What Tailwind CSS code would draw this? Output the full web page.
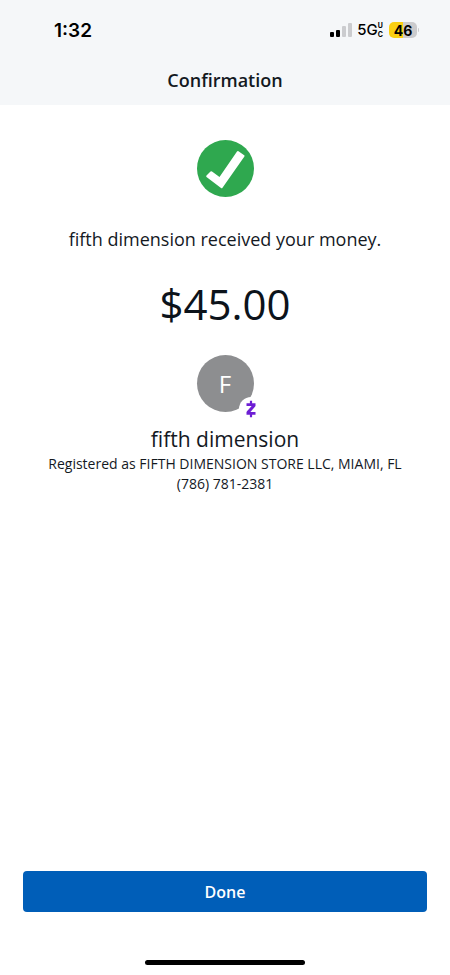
<!DOCTYPE html>
<html lang="en">
<head>
<meta charset="utf-8">
<meta name="viewport" content="width=device-width, initial-scale=1">
<title>Confirmation</title>
<script src="https://cdn.jsdelivr.net/npm/@tailwindcss/browser@4"></script>
</head>
<body class="flex min-h-screen flex-col bg-white font-['Open_Sans',sans-serif] text-[#14191f]">
<header class="bg-[#f5f7f9]">
  <div class="flex h-[60px] items-center justify-between pr-[31px] pl-[54px] font-['Inter',sans-serif] text-black">
    <time class="pt-0.5 text-[19px] font-semibold">1:32</time>
    <div class="flex items-center">
      <svg class="mr-1 h-4 w-6" viewBox="0 0 24 16" role="img" aria-label="Signal strength">
        <rect x="1" y="10" width="4" height="5" rx="1"/>
        <rect x="7" y="8" width="4" height="7" rx="1"/>
        <rect x="13" y="4" width="4" height="11" rx="1" fill="#cbcccf"/>
        <rect x="19" y="1" width="4" height="14" rx="1" fill="#cbcccf"/>
      </svg>
      <span class="text-[15px] font-medium">5G</span>
      <span class="mr-1.5 flex flex-col text-[7px] leading-[9px] font-bold"><span>U</span><span>C</span></span>
      <span class="flex h-4 w-7 items-center justify-center rounded-[5px] bg-linear-to-r from-[#fbcf12] from-50% to-[#cbcbcd] to-50% text-[14px] font-bold">46</span>
      <span class="ml-px h-1 w-px rounded-r bg-[#cbcbcd]"></span>
    </div>
  </div>
  <h1 class="h-[45px] pt-2 text-center text-[18px] leading-6 font-semibold">Confirmation</h1>
</header>
<main class="flex flex-1 flex-col items-center px-6 pt-[35px] text-center">
  <svg class="size-[57px]" viewBox="0 0 57 57" role="img" aria-label="Success">
    <circle cx="28.500" cy="28.500" r="28.500" fill="#2fa84f"/>
    <path d="M9.500 35.500 13.500 31.500Q14.200 31 15 31.500L22.500 37 40 11.500Q40.700 10.700 41.500 11.300L47.200 15.300Q47.900 15.800 47.400 16.500L25.500 47.800Q24.800 48.700 24 48L9.500 37Q8.800 36.300 9.500 35.500Z" fill="#fff"/>
  </svg>
  <p class="mt-7 text-[18px] leading-7">fifth dimension received your money.</p>
  <p class="mt-6 text-[42px] leading-[54px] text-[#0c131b]">$45.00</p>
  <div class="relative mt-6 flex size-[57px] items-center justify-center rounded-full bg-[#8d8e90] text-[24px] text-white">F
    <span class="absolute top-[42px] left-[42px] flex size-6 items-center justify-center rounded-full bg-white">
      <svg class="size-[18px]" viewBox="0 0 18 18" fill="none" stroke="#6d1ed4" role="img" aria-label="Zelle">
        <path d="M4.500 4.600H13.500M4.500 13.400H13.500" stroke-width="2.600"/>
        <path d="M12.300 5.200 5.700 12.800" stroke-width="3"/>
        <path d="M9 .8V5M9 13V17.200" stroke-width="2.200"/>
      </svg>
    </span>
  </div>
  <h2 class="mt-3 text-[21px] leading-[30px]">fifth dimension</h2>
  <p class="text-[14px] leading-5">Registered as FIFTH DIMENSION STORE LLC, MIAMI, FL</p>
  <p class="text-[14px] leading-5">(786) 781-2381</p>
</main>
<footer class="flex flex-col items-center px-[23px] pb-2.5">
  <button type="button" class="h-[41px] w-full rounded bg-[#005eb8] text-[16px] font-semibold text-white">Done</button>
  <div class="mt-12 h-[5px] w-40 rounded-full bg-black"></div>
</footer>
</body>
</html>
